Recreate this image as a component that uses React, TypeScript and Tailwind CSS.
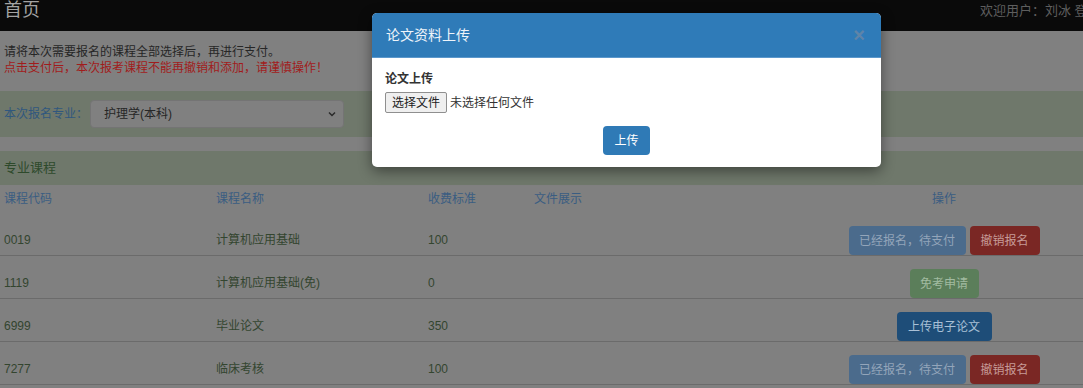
import React from "react";

const FONT = '"Liberation Sans", "Noto Sans CJK SC", sans-serif';

type Row = { code: string; name: string; fee: string; actions: React.ReactNode };

function Btn({ children, cls }: { children: React.ReactNode; cls: string }) {
  return (
    <span className={`inline-flex h-[29px] items-center justify-center rounded-[4px] text-[12px] leading-none ${cls}`}>
      {children}
    </span>
  );
}

const pending = (
  <div className="flex gap-[4px]">
    <Btn cls="w-[117px] bg-[#4b6b8c] text-[#93a5ba]">已经报名，待支付</Btn>
    <Btn cls="w-[70px] bg-[#7a2724] text-[#c79b98]">撤销报名</Btn>
  </div>
);

const rows: Row[] = [
  { code: "0019", name: "计算机应用基础", fee: "100", actions: pending },
  {
    code: "1119",
    name: "计算机应用基础(免)",
    fee: "0",
    actions: <Btn cls="w-[69px] bg-[#5b7e5a] text-[#a2bba1]">免考申请</Btn>,
  },
  {
    code: "6999",
    name: "毕业论文",
    fee: "350",
    actions: <Btn cls="w-[95px] bg-[#1e4d78] text-[#a9c0d6]">上传电子论文</Btn>,
  },
  { code: "7277", name: "临床考核", fee: "100", actions: pending },
  { code: "", name: "", fee: "", actions: null },
];

export default function App() {
  return (
    <div className="relative h-[388px] w-[1083px] overflow-hidden bg-[#808080]" style={{ fontFamily: FONT }}>
      {/* navbar */}
      <div className="flex h-[31px] items-start justify-between bg-[#0a0a0a]">
        <span className="pl-[4px] text-[18px] leading-[21px] text-[#a3a3a3]">首页</span>
        <span className="w-[103px] overflow-hidden whitespace-nowrap pt-[2px] text-[13px] leading-[18px] text-[#5e5e5e]">
          欢迎用户：刘冰 登录
        </span>
      </div>

      {/* notice */}
      <div className="pl-[4px] pt-[13px] text-[12px] leading-[16px]">
        <div className="text-[#262626]">请将本次需要报名的课程全部选择后，再进行支付。</div>
        <div className="text-[#a01c1c]">点击支付后，本次报考课程不能再撤销和添加，请谨慎操作！</div>
      </div>

      {/* major selector */}
      <div className="mt-[15px] flex h-[46px] items-center bg-[#6f786b] pl-[4px]">
        <span className="text-[12px] leading-[16px] text-[#30577e]">本次报名专业：</span>
        <div className="ml-[2px] flex h-[28px] w-[254px] items-center justify-between rounded-[4px] border border-[#747474] bg-[#808080] pl-[13px] pr-[6px]">
          <span className="text-[12px] leading-[16px] text-[#262626]">护理学(本科)</span>
          <svg width="10" height="10" viewBox="0 0 10 10">
            <path d="M2 3.5 L5 6.5 L8 3.5" fill="none" stroke="#2a2a2a" strokeWidth="1.5" />
          </svg>
        </div>
      </div>

      {/* section title */}
      <div className="mt-[14px] flex h-[34px] items-center bg-[#6f786b] pl-[4px]">
        <span className="text-[13px] leading-[16px] text-[#2e4a2b]">专业课程</span>
      </div>

      {/* table */}
      <div className="text-[12px] leading-[16px]">
        <div className="grid h-[28px] grid-cols-[212px_212px_106px_271px_1fr] items-end pb-[6px] pl-[4px] text-[#3a5d82]">
          <span>课程代码</span>
          <span>课程名称</span>
          <span>收费标准</span>
          <span>文件展示</span>
          <span className="text-center">操作</span>
        </div>
        {rows.map((r, i) => (
          <div
            key={i}
            className="grid h-[43px] grid-cols-[212px_212px_106px_271px_1fr] items-end border-b border-[#6b6b6b] pl-[4px] text-[#33452f]"
          >
            <span className="pb-[7px]">{r.code}</span>
            <span className="pb-[7px]">{r.name}</span>
            <span className="pb-[7px]">{r.fee}</span>
            <span />
            <div className="flex justify-center">{r.actions}</div>
          </div>
        ))}
      </div>

      {/* modal */}
      <div className="absolute left-[372px] top-[13px] w-[509px] overflow-hidden rounded-[5px] bg-white shadow-[0_4px_14px_rgba(0,0,0,0.45)]">
        <div className="flex h-[45px] items-center justify-between border-b border-[#5c98cc] bg-[#2f7bb8] pl-[14px] pr-[16px]">
          <span className="text-[14px] leading-[18px] text-[#eef4fa]">论文资料上传</span>
          <span className="text-[20px] font-bold leading-[20px] text-[#5f84a8]">×</span>
        </div>
        <div className="flex flex-col px-[13px] pb-[12px] pt-[13px]">
          <span className="text-[12px] font-bold leading-[16px] text-[#333]">论文上传</span>
          <div className="mt-[5px] flex items-center">
            <span className="flex h-[21px] w-[62px] items-center justify-center rounded-[2px] border border-[#8f8f8f] bg-[#efefef] text-[12px] leading-none text-[#222]">
              选择文件
            </span>
            <span className="ml-[3px] text-[12px] leading-[16px] text-[#333]">未选择任何文件</span>
          </div>
          <div className="mt-[13px] flex justify-center">
            <span className="flex h-[29px] w-[47px] items-center justify-center rounded-[4px] bg-[#2f7ab6] text-[12px] leading-none text-white">
              上传
            </span>
          </div>
        </div>
      </div>
    </div>
  );
}
